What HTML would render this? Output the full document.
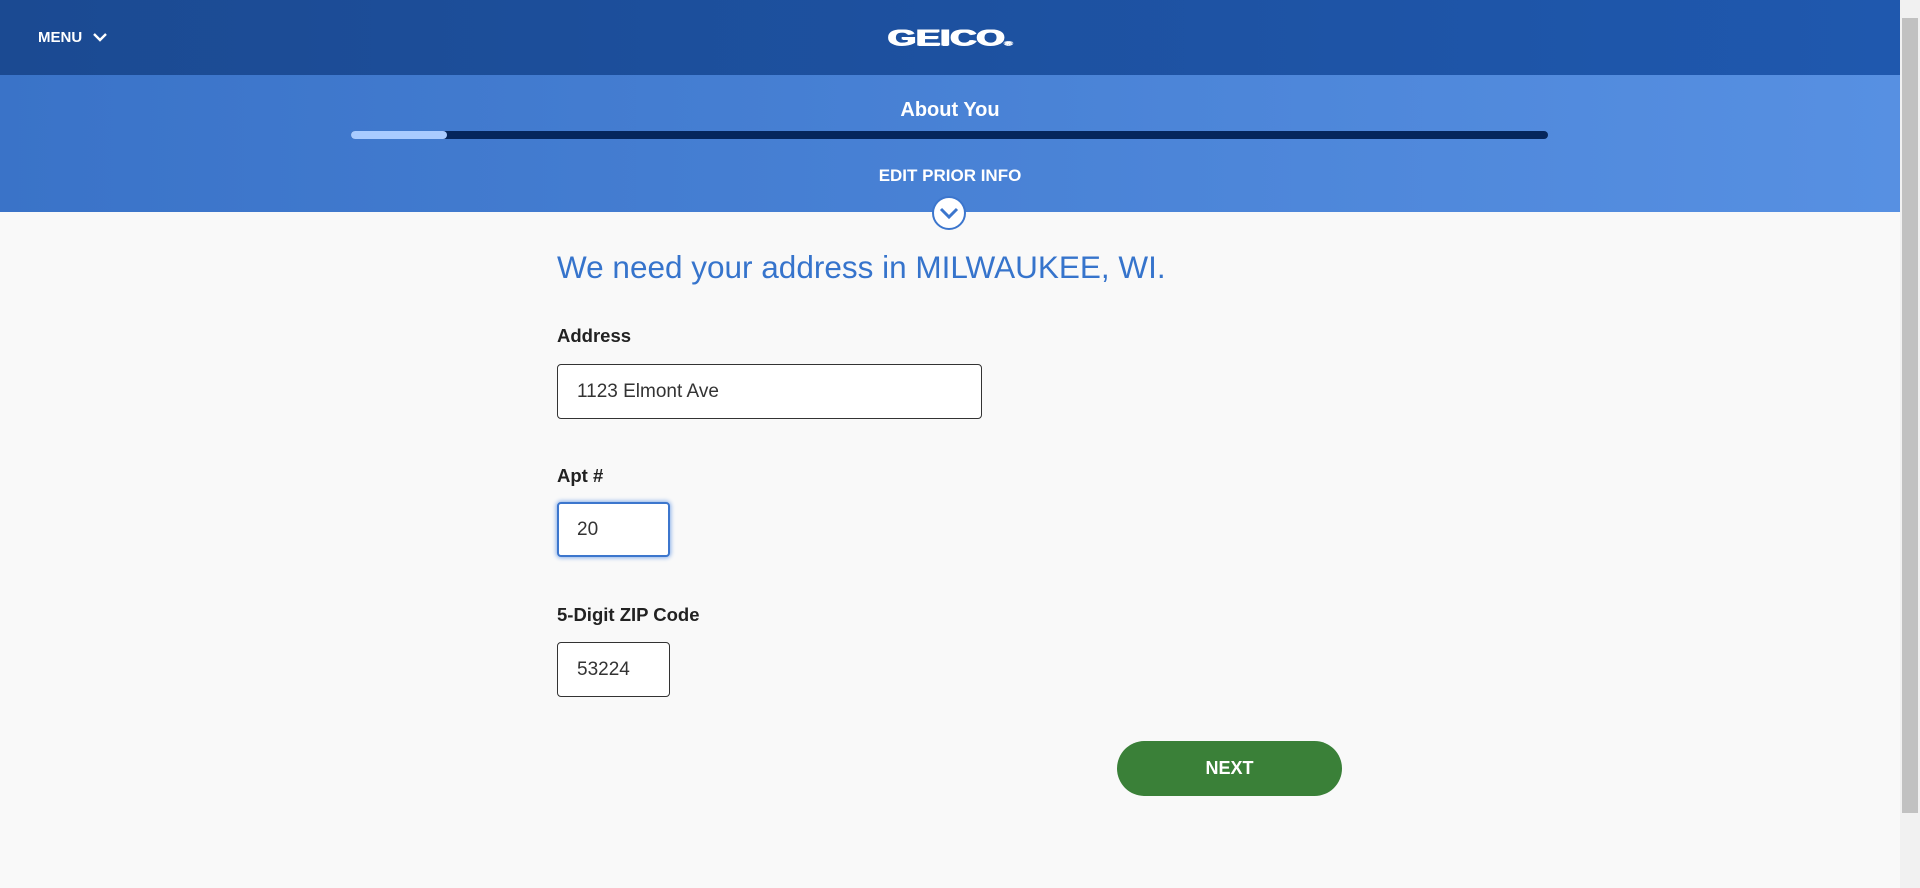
<!DOCTYPE html>
<html><head><meta charset="utf-8"><style>
*{margin:0;padding:0;box-sizing:border-box}
body{width:1920px;height:888px;background:#f9f9f9;font-family:"Liberation Sans",sans-serif;position:relative;overflow:hidden}
.top{position:absolute;left:0;top:0;width:1900px;height:75px;background:linear-gradient(90deg,#1b4a92,#1f58ae)}
.band{position:absolute;left:0;top:75px;width:1900px;height:137px;background:linear-gradient(90deg,#3a73c8,#5790e2)}
.menu{position:absolute;left:38px;top:29px;color:#fff;font-weight:bold;font-size:15px}
.logo{position:absolute;left:880px;top:22px;width:140px;text-align:center;color:#fff;font-weight:900;font-size:29px;letter-spacing:0;transform:scale(1.25,.8);text-shadow:1px 0 0 #fff,-1px 0 0 #fff,0 1px 0 #fff}
.c{position:absolute;left:0;width:1900px;text-align:center;color:#fff;font-weight:bold}
.bar{position:absolute;left:351px;top:131px;width:1197px;height:8px;border-radius:4px;background:#05265c}
.fill{position:absolute;left:0;top:0;width:96px;height:8px;border-radius:4px;background:#a9cbff}
.circ{position:absolute;left:932px;top:196px;width:34px;height:34px;border-radius:50%;background:#fff;border:2px solid #3c76cd}
h1{position:absolute;left:557px;top:249px;font-weight:normal;font-size:31.5px;color:#3674cc}
.lbl{position:absolute;left:557px;font-size:18.5px;font-weight:bold;color:#222}
.inp{position:absolute;left:557px;height:55px;border:1px solid #333;border-radius:4px;background:#fff;font-size:19px;color:#333;padding-left:19px;line-height:53px}
.foc{border:2px solid #3c76cd;box-shadow:0 0 4px 1px #8ab0ea;padding-left:18px;line-height:51px}
.btn{position:absolute;left:1117px;top:741px;width:225px;height:55px;border-radius:28px;background:#3a8038;color:#fff;font-weight:bold;font-size:18px;text-align:center;line-height:55px}
.sb{position:absolute;left:1900px;top:0;width:20px;height:888px;background:#f1f1f1}
.th{position:absolute;left:2px;top:18px;width:16px;height:795px;background:#c1c1c1}
</style></head><body>
<div class="top"></div><div class="band"></div>
<div class="menu">MENU <svg width="16" height="12" viewBox="0 0 16 12" style="margin-left:6px;vertical-align:-1px"><path d="M2 3l6 6 6-6" stroke="#fff" stroke-width="2.4" fill="none"/></svg></div>
<div class="logo">GEICO<span style="font-size:8px">®</span></div>
<div class="c" style="top:99px;font-size:20px">About You</div>
<div class="bar"><div class="fill"></div></div>
<div class="c" style="top:166px;font-size:17px">EDIT PRIOR INFO</div>
<div class="circ"><svg width="30" height="30" viewBox="0 0 30 30"><path d="M7 11l8 8 8-8" stroke="#3c76cd" stroke-width="3" fill="none"/></svg></div>
<h1>We need your address in MILWAUKEE, WI.</h1>
<div class="lbl" style="top:325px">Address</div>
<div class="inp" style="top:364px;width:425px">1123 Elmont Ave</div>
<div class="lbl" style="top:465px">Apt #</div>
<div class="inp foc" style="top:502px;width:113px">20</div>
<div class="lbl" style="top:604px">5-Digit ZIP Code</div>
<div class="inp" style="top:642px;width:113px">53224</div>
<div class="btn">NEXT</div>
<div class="sb"><div class="th"></div></div>
</body></html>
